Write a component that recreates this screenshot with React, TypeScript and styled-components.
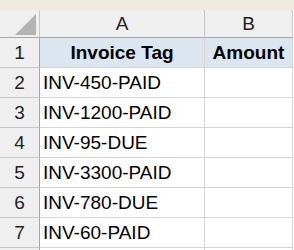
import React from "react";
import styled, { createGlobalStyle } from "styled-components";

const rows = [
  "INV-450-PAID",
  "INV-1200-PAID",
  "INV-95-DUE",
  "INV-3300-PAID",
  "INV-780-DUE",
  "INV-60-PAID",
];

function App() {
  return (
    <>
      <GlobalStyle />
      <Sheet>
        <TopStrip />
        <Grid>
          <Corner>
            <CornerTriangle width="22" height="22" viewBox="0 0 22 22">
              <polygon points="21,0 21,21 0,21" fill="#b3b3b3" />
            </CornerTriangle>
          </Corner>
          <ColHead>A</ColHead>
          <ColHead>B</ColHead>

          <RowHead>1</RowHead>
          <TitleCell>Invoice Tag</TitleCell>
          <TitleCell>Amount</TitleCell>

          {rows.map((tag, i) => (
            <React.Fragment key={tag}>
              <RowHead>{i + 2}</RowHead>
              <Cell>{tag}</Cell>
              <Cell />
            </React.Fragment>
          ))}
          <RowHead />
          <Cell />
          <Cell />
        </Grid>
      </Sheet>
    </>
  );
}

export default App;

const GlobalStyle = createGlobalStyle`
  html, body {
    margin: 0;
    padding: 0;
    background: #ffffff;
    overflow: hidden;
  }
  body {
    font-family: "Liberation Sans", Arial, sans-serif;
  }
`;

const Sheet = styled.div`
  width: 294px;
  height: 250px;
  overflow: hidden;
  background: #ffffff;
`;

const TopStrip = styled.div`
  height: 10px;
  background: #efebdc;
`;

const Grid = styled.div`
  display: grid;
  grid-template-columns: 40px 165px 88px;
  grid-template-rows: 28px repeat(8, 30px);
  font-size: 19px;
`;

const HeadBase = styled.div`
  display: flex;
  align-items: center;
  justify-content: center;
  background: #efefef;
  color: #1f1f1f;
  border-right: 1px solid #bdbdbd;
  border-bottom: 1px solid #bdbdbd;
`;

const Corner = styled(HeadBase)`
  position: relative;
  border-bottom-color: #a6a6a6;
  border-right-color: #c8c8c8;
`;

const CornerTriangle = styled.svg`
  position: absolute;
  left: 15px;
  top: 4px;
`;

const ColHead = styled(HeadBase)`
  border-bottom-color: #a6a6a6;
  border-right-color: #c8c8c8;
`;

const RowHead = styled(HeadBase)`
  border-right-color: #a6a6a6;
  border-bottom-color: #c8c8c8;
`;

const Cell = styled.div`
  display: flex;
  align-items: center;
  padding-left: 3px;
  color: #000000;
  border-right: 1px solid #d4d4d4;
  border-bottom: 1px solid #d4d4d4;
  white-space: nowrap;
`;

const TitleCell = styled(Cell)`
  justify-content: center;
  padding-left: 0;
  font-weight: bold;
  background: #dce6f1;
`;
